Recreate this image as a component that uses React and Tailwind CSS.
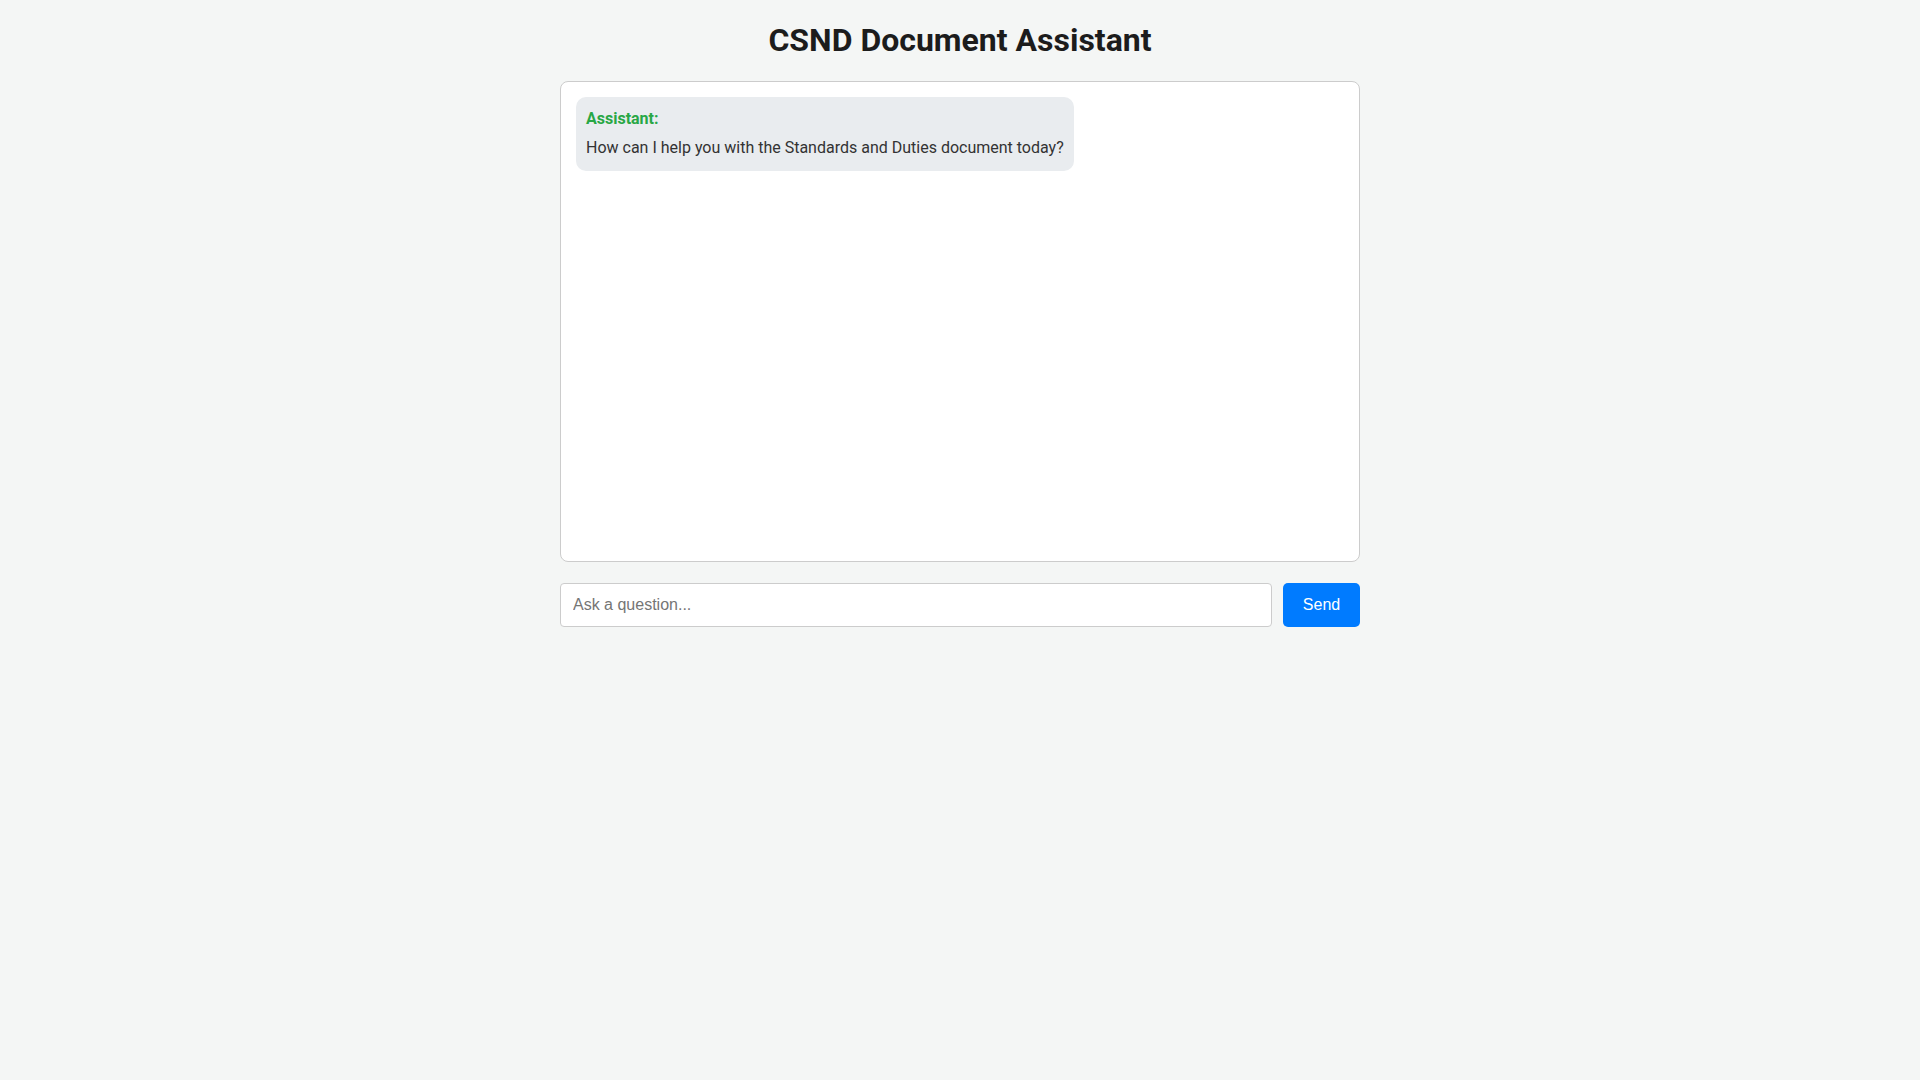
import React, { useState } from "react";

const App = () => {
  const [question, setQuestion] = useState("");
  const messages = [
    {
      role: "Assistant",
      text: "How can I help you with the Standards and Duties document today?",
    },
  ];

  return (
    <div className="w-full min-h-screen bg-[#f4f6f5] font-['Roboto',sans-serif] text-[#333333]">
      <div className="w-[800px] mx-auto pt-[21px]">
        {/* HEADER */}
        <h1 className="text-[32px] leading-[38px] font-bold text-center text-[#1c1c1c] mb-[22px]">
          CSND Document Assistant
        </h1>

        {/* CHAT BOX */}
        <div className="h-[481px] bg-white border border-[#cccccc] rounded-lg p-[15px] overflow-y-auto flex flex-col items-start gap-2">
          {messages.map((m, i) => (
            <div key={i} className="bg-[#e9ecef] rounded-[10px] px-[10px] pt-[10px] pb-[11px] max-w-[70%]">
              <div className="font-bold text-[#28a745] text-base leading-6 mb-[5px]">{m.role}:</div>
              <div className="text-base leading-6 text-[#333333]">{m.text}</div>
            </div>
          ))}
        </div>

        {/* INPUT ROW */}
        <div className="flex gap-[11px] mt-[21px]">
          <input
            type="text"
            value={question}
            onChange={(e) => setQuestion(e.target.value)}
            placeholder="Ask a question..."
            className="flex-1 h-[44px] px-3 bg-white border border-[#cccccc] rounded-[4px] text-base font-['Liberation_Sans',Arial,sans-serif] text-[#333333] placeholder:text-[#757575] outline-none"
          />
          <button className="w-[77px] h-[44px] bg-[#007bff] text-white rounded-[5px] text-base font-['Liberation_Sans',Arial,sans-serif]">
            Send
          </button>
        </div>
      </div>
    </div>
  );
};

export default App;
